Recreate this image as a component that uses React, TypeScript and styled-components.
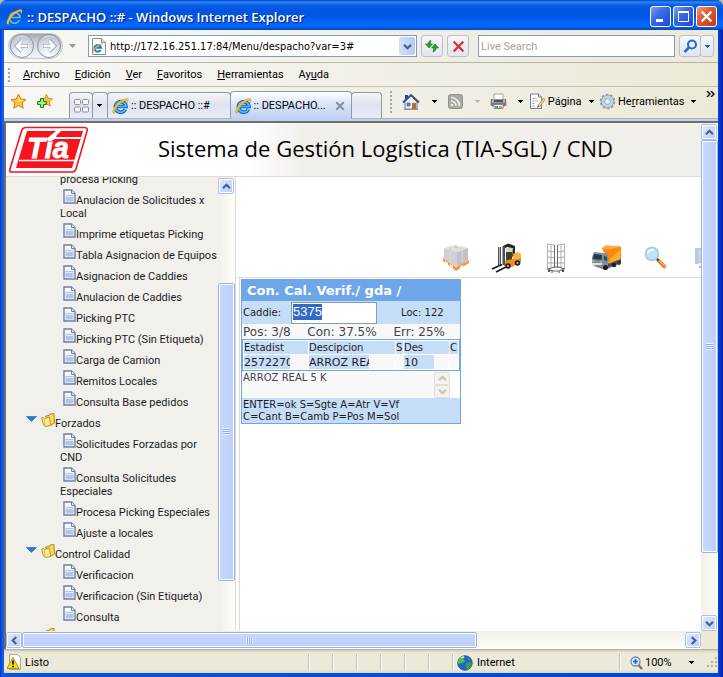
import React from "react";
import styled, { createGlobalStyle, css } from "styled-components";

const ui = `Roboto, "Noto Sans", sans-serif`;
const wide = `"DejaVu Sans", sans-serif`;

const Global = createGlobalStyle`
  * { box-sizing: border-box; }
  html, body, #root { height: 100%; }
  body { margin: 0; background: #b8b8b0; font: 11px/13px ${ui}; color: #000; overflow: hidden; }
  button, input, textarea { font: inherit; color: inherit; margin: 0; padding: 0; border-radius: 0; }
  button { border: 0; background: none; }
  svg { display: block; flex: none; }
`;

/* ---------- window frame ---------- */

const Window = styled.div`
  height: 100%;
  min-height: 480px;
  display: flex;
  flex-direction: column;
  padding: 0 5px 4px 4px;
  border-radius: 7px 7px 0 0;
  overflow: hidden;
  background: linear-gradient(90deg, #0831d9 0, #0855dd 2px, #166aee 3px, #0855dd 4px, #0048d8 calc(100% - 5px), #0030c8 calc(100% - 2px), #001ea0 100%);
`;

const TitleBar = styled.header`
  flex: none;
  height: 30px;
  margin: 0 -5px 0 -4px;
  padding: 3px 6px 0 6px;
  display: flex;
  align-items: center;
  gap: 4px;
  background: linear-gradient(180deg, #0842c0 0, #2a86f8 2px, #0a60ea 5px, #0055e0 10px, #0056e4 16px, #0468fe 24px, #0464f8 27px, #0242b8 30px);
`;

const Title = styled.h1`
  flex: 1;
  margin: 0;
  font: 600 13px/20px "Open Sans", sans-serif;
  color: #fff;
  text-shadow: 1px 1px 1px #0a1883;
  white-space: nowrap;
`;

const CaptionButton = styled.button<{ $close?: boolean }>`
  width: 21px;
  height: 21px;
  margin-left: -2px;
  display: grid;
  place-items: center;
  border: 1px solid #fff;
  border-radius: 3px;
  background: ${(p) =>
    p.$close
      ? "linear-gradient(135deg, #f0a08a, #e05a34 40%, #c8380e)"
      : "linear-gradient(135deg, #7e9ff0, #3a6ae8 40%, #1c48d0)"};
`;

const Chrome = styled.div`
  flex: none;
  background: linear-gradient(90deg, #f7f7f5, #ece9d8);
`;

const AddressRow = styled.form`
  height: 33px;
  padding: 0 4px;
  display: flex;
  align-items: center;
  border-bottom: 1px solid #b8b5a6;
`;

const NavPill = styled.div`
  width: 55px;
  height: 26px;
  display: flex;
  align-items: center;
  justify-content: space-between;
  padding: 0 1px;
  border-radius: 13px;
  background: linear-gradient(#a5a9af, #d4d6da 40%, #f4f5f7);
  border: 1px solid #c3c6cb;
`;

const NavButton = styled.button`
  width: 24px;
  height: 24px;
  display: grid;
  place-items: center;
  border-radius: 12px;
  border: 1px solid #8d939c;
  background: radial-gradient(circle at 50% 90%, #fff, #dde3ea 50%, #c0c9d5 75%, #eef1f5);
`;

const HistoryButton = styled.button`
  width: 25px;
  height: 22px;
  padding-right: 6px;
  display: grid;
  place-items: center;
`;

const field = css`
  height: 22px;
  border: 1px solid #7f9db9;
  background: #fff;
`;

const AddressBox = styled.div`
  ${field}
  flex: 331 1 0;
  min-width: 0;
  display: flex;
  align-items: center;
  gap: 3px;
  padding: 0 1px 0 2px;
`;

const BareInput = styled.input`
  flex: 1;
  min-width: 0;
  border: 0;
  outline: 0;
  background: transparent;
  font-family: "DejaVu Sans Condensed", ${ui};
`;

const DropButton = styled.button`
  width: 16px;
  height: 18px;
  display: grid;
  place-items: center;
  border-radius: 2px;
  background: linear-gradient(90deg, #d3e0fd, #b4caf7);
`;

const SearchInput = styled.input`
  ${field}
  flex: 195 1 0;
  min-width: 0;
  margin-left: 9px;
  padding: 0 2px;
  outline: 0;
  &::placeholder { color: #a5a294; opacity: 1; }
`;

const ToolButton = styled.button<{ $w?: number; $gap?: number }>`
  width: ${(p) => p.$w ?? 22}px;
  height: 22px;
  margin-left: ${(p) => p.$gap ?? 4}px;
  display: grid;
  place-items: center;
  border: 1px solid #b9c0cc;
  border-radius: 3px;
  background: linear-gradient(#f6f7fa, #e2e6f0);
`;

const MenuRow = styled.nav`
  height: 24px;
  display: flex;
  align-items: center;
  gap: 13px;
  padding-left: 4px;
  border-bottom: 1px solid #c5c2b4;
`;

const MenuItems = styled.div`
  display: flex;
  gap: 15px;
  button { height: 20px; }
`;

const Grip = styled.span<{ $h: number }>`
  width: 2px;
  height: ${(p) => p.$h}px;
  flex: none;
  background: repeating-linear-gradient(#a9a698 0 2px, transparent 2px 4px);
`;

const TabRow = styled.div`
  height: 31px;
  display: flex;
  align-items: flex-end;
  padding: 0 3px 0 4px;
`;

const Favs = styled.div`
  width: 61px;
  height: 31px;
  flex: none;
  display: flex;
  align-items: center;
  gap: 9px;
  padding: 0 0 3px 2px;
`;

const Tab = styled.button<{ $active?: boolean; $grow?: number; $w?: number }>`
  flex: ${(p) => (p.$grow ? `${p.$grow} 1 0` : "none")};
  ${(p) => p.$w && `width: ${p.$w}px;`}
  min-width: 0;
  height: ${(p) => (p.$active ? 28 : 26)}px;
  ${(p) => p.$active && "margin-bottom: -1px;"}
  display: flex;
  align-items: center;
  gap: 2px;
  padding: 0 6px 0 4px;
  border: 1px solid #919b9c;
  border-bottom: 0;
  border-radius: 4px 4px 0 0;
  white-space: nowrap;
  text-align: left;
  background: ${(p) =>
    p.$active ? "linear-gradient(#fff, #dce7fb 40%, #bfd0f3)" : "linear-gradient(#f6f6f8, #dfe3ee 45%, #e8ecf6)"};
  & + & { margin-left: -1px; }
  span { flex: 1; }
`;

const Commands = styled.div`
  flex: 326 1 0;
  min-width: 0;
  height: 31px;
  display: flex;
  align-items: center;
  padding: 0 0 2px 8px;
`;

const Command = styled.button<{ $w: number }>`
  width: ${(p) => p.$w}px;
  flex: none;
  display: flex;
  align-items: center;
  gap: 2px;
  white-space: nowrap;
  i { flex: 1; }
`;

const More = styled.button`
  align-self: flex-start;
  margin-left: auto;
  padding: 4px 0 0;
`;

const TabEdge = styled.div`
  height: 3px;
  background: #bfd0f3;
  border-top: 1px solid #a8b4cc;
`;

/* ---------- page area ---------- */

const Viewport = styled.main`
  flex: 1;
  min-height: 0;
  display: grid;
  grid-template: minmax(0, 1fr) 18px / minmax(0, 1fr) 17px;
  border: solid #716f64;
  border-width: 2px 0 0 2px;
  background: #fff;
`;

const Page = styled.div`
  display: flex;
  flex-direction: column;
  min-width: 0;
  min-height: 0;
  overflow: hidden;
`;

const Banner = styled.header`
  flex: none;
  height: 54px;
  display: flex;
  align-items: center;
  gap: 68px;
  padding: 0 2px;
  border-bottom: 1px solid #dedbd0;
  background: linear-gradient(90deg, #fff 240px, #f1efea 300px);
`;

const BannerTitle = styled.h2`
  margin: 0;
  padding-bottom: 3px;
  font: 22px/30px "Open Sans", sans-serif;
  white-space: nowrap;
`;

const Body = styled.div`
  flex: 1;
  min-height: 0;
  display: flex;
`;

const Sidebar = styled.aside`
  width: 230px;
  flex: none;
  display: flex;
  background: #f1f0eb;
  border-right: 1px solid #dedbd0;
`;

const Tree = styled.ul`
  flex: 1;
  min-width: 0;
  margin: 0;
  padding: 0;
  list-style: none;
  overflow: hidden;
  & > li:first-child { margin-top: -4px; }
`;

const Leaf = styled.li`
  padding-left: 54px;
  a { color: #1c1c1c; text-decoration: none; }
  svg { display: inline-block; vertical-align: baseline; margin: 3px 0 0 3px; }
`;

const Branch = styled.li`
  display: flex;
  align-items: flex-end;
  height: 21px;
  padding-left: 20px;
  button { display: flex; align-items: flex-end; height: 21px; color: #1c1c1c; }
  svg:first-child { margin: 0 4px 8px 0; }
  svg + svg { margin-bottom: 3px; }
`;

const Track = styled.div<{ $horizontal?: boolean }>`
  display: flex;
  flex: none;
  min-width: 0;
  min-height: 0;
  flex-direction: ${(p) => (p.$horizontal ? "row" : "column")};
  ${(p) => (p.$horizontal ? "height: 18px; padding: 1px 0;" : "width: 17px; padding: 1px 0 0;")}
  background: ${(p) => `linear-gradient(${p.$horizontal ? "180deg" : "90deg"}, #f0efe8, #fefefb)`};
`;

const ScrollButton = styled.button`
  width: 16px;
  height: 16px;
  flex: none;
  display: grid;
  place-items: center;
  border: 1px solid #a9bff0;
  border-radius: 2px;
  background: linear-gradient(135deg, #e0e9fe, #b9cdfa);
  box-shadow: inset 0 0 0 1px #fff;
`;

const Thumb = styled.div<{ $horizontal?: boolean; $size: number }>`
  flex: ${(p) => p.$size} 1 0;
  display: grid;
  place-items: center;
  border: 1px solid #98b1e4;
  border-radius: 2px;
  box-shadow: inset 0 0 0 1px #fff;
  background: ${(p) => `linear-gradient(${p.$horizontal ? "180deg" : "90deg"}, #c9d8fd, #bccffb)`};
  &::after {
    content: "";
    width: 7px;
    height: 7px;
    background: ${(p) => `repeating-linear-gradient(${p.$horizontal ? "90deg" : "180deg"}, #eef4fe 0 1px, #8cb0f8 1px 2px)`};
  }
`;

const Rest = styled.div<{ $size: number }>`
  flex: ${(p) => p.$size} 1 0;
`;

const Corner = styled.div`
  background: #ece9d8;
`;

const Content = styled.section`
  flex: 1;
  min-width: 0;
  display: flex;
  flex-direction: column;
`;

const IconBar = styled.div`
  flex: none;
  height: 101px;
  display: flex;
  align-items: flex-end;
  padding: 0 0 2px 195px;
  overflow: hidden;
  border-bottom: 1px solid #dedbd0;
  button { width: 50px; height: 34px; flex: none; display: grid; place-items: center; }
`;

const Frame = styled.div`
  flex: 1;
  margin-left: 3px;
  padding: 1px;
  border-left: 1px solid #dedbd0;
`;

const Card = styled.form`
  width: 220px;
  border: 1px solid #6ea7e9;
  font: 10px/12px ${wide};
  color: #1c1c1c;
`;

const CardTitle = styled.h3`
  margin: 0;
  padding: 0 5px;
  font: bold 13px/21px ${wide};
  color: #fff;
  background: #6ea7e9;
  white-space: nowrap;
`;

const CaddieRow = styled.div`
  height: 23px;
  display: flex;
  align-items: center;
  background: #c6ddf7;
  label { width: 49px; padding-left: 1px; }
  output { margin-left: 24px; }
`;

const CaddieInput = styled.div`
  width: 86px;
  height: 22px;
  display: flex;
  align-items: flex-start;
  padding: 1px;
  background: #fff;
  border: 1px solid #7f9db9;
  input {
    width: 29px;
    height: 16px;
    border: 0;
    outline: 0;
    background: #316ac5;
    color: #fff;
    font: 13px/16px "Liberation Sans", sans-serif;
  }
`;

const Stats = styled.div`
  height: 15px;
  display: flex;
  align-items: center;
  padding: 1px 15px 0 1px;
  justify-content: space-between;
  background: #f8f8f8;
  font-size: 12px;
  color: #444;
`;

const Grid = styled.table`
  width: 100%;
  table-layout: fixed;
  border-collapse: separate;
  border-spacing: 1px;
  border: 1px solid #6ea7e9;
  th { font-weight: normal; text-align: left; background: #c6ddf7; padding: 0; height: 13px; }
  td { padding: 0; height: 14px; background: #f8f8f8; }
  th, td { overflow: hidden; white-space: nowrap; }
`;

const CellInput = styled.input<{ $w: number }>`
  display: block;
  width: ${(p) => p.$w}px;
  height: 14px;
  border: 0;
  outline: 0;
  background: #c6ddf7;
  font-size: 11px;
`;

const Detail = styled.div`
  height: 27px;
  display: flex;
  textarea {
    flex: 1;
    min-width: 0;
    height: 27px;
    padding: 1px 0 0 1px;
    border: 0;
    outline: 0;
    resize: none;
    overflow: hidden;
    background: #f8f8f8;
    color: #444;
  }
`;

const Spinner = styled.div`
  width: 26px;
  padding: 1px 10px 0 0;
  background: linear-gradient(90deg, #f8f8f8 16px, #fff 16px);
  button {
    width: 16px;
    height: 13px;
    display: grid;
    place-items: center;
    border: 1px solid #e0ded2;
    border-radius: 2px;
    background: #f4f3ec;
  }
`;

const Help = styled.p`
  margin: 0;
  padding: 1px 1px 0;
  background: #c6ddf7;
  white-space: nowrap;
`;

/* ---------- status bar ---------- */

const StatusBar = styled.footer`
  flex: none;
  height: 24px;
  padding-top: 3px;
  display: flex;
  align-items: center;
  background: linear-gradient(#aaa798 0, #dedbc9 2px, #ece9d8 5px, #ece9d8 20px, #dedac4);
`;

const StatusText = styled.div`
  flex: 1;
  display: flex;
  align-items: center;
  gap: 3px;
  padding-left: 2px;
`;

const Cell = styled.div<{ $w: number }>`
  width: ${(p) => p.$w}px;
  height: 17px;
  flex: none;
  display: flex;
  align-items: center;
  gap: 4px;
  padding-left: 4px;
  border-left: 1px solid #c5c2b4;
  box-shadow: inset 1px 0 #fff;
`;

const ZoomButton = styled.button`
  flex: 1;
  display: flex;
  align-items: center;
  gap: 2px;
  padding-left: 6px;
  svg:last-child { margin-left: 15px; }
`;

/* ---------- drawings ---------- */

const Caret = ({ color = "#000" }: { color?: string }) => (
  <svg width="5" height="3" viewBox="0 0 5 3" shapeRendering="crispEdges">
    <path d="M0 0h5v1H4v1H3v1H2V2H1V1H0z" fill={color} />
  </svg>
);

const turns = { up: 0, right: 90, down: 180, left: 270 };
const Chevron = ({ dir, color = "#4d6185" }: { dir: keyof typeof turns; color?: string }) => (
  <svg width="9" height="9" viewBox="0 0 9 9">
    <path d="M1 6.2 4.5 2.7 8 6.2" transform={`rotate(${turns[dir]} 4.5 4.5)`} fill="none" stroke={color} strokeWidth="2.2" />
  </svg>
);

const IeIcon = () => (
  <svg width="17" height="16" viewBox="0 0 17 16">
    <path d="M13.500 11.200A5.300 5.300 0 1 1 14 8.500H5" fill="none" stroke="#0c5fc4" strokeWidth="3.600" />
    <path d="M13.500 11.200A5.300 5.300 0 1 1 14 8.500H5" fill="none" stroke="#58bcf6" strokeWidth="1.700" />
    <path d="M3 15.200C-.8 16 .6 10.800 4.600 6.200 8.800 1.500 15-.8 16 1.200c.5 1-.2 2.600-1 3.800.2-1.600.1-2.800-1.300-2.600C9 3.200 1.600 11.200 3 15.200z" fill="#fbc02a" stroke="#d38c10" strokeWidth=".4" />
  </svg>
);

const PageIe = () => (
  <svg width="16" height="17" viewBox="0 0 16 17">
    <path d="M1.500.5h9l4 4v12h-13z" fill="#fffef8" stroke="#918f80" />
    <path d="M10.500.5v4h4" fill="#e4e2d2" stroke="#918f80" />
    <path d="M9.600 12A3.300 3.300 0 1 1 10 9.800H4.500" fill="none" stroke="#1c78d8" strokeWidth="2" />
    <path d="M2.400 14.500C1 13 7 5.600 11.500 6" fill="none" stroke="#f0b01a" strokeWidth="1.200" />
  </svg>
);

const Arrow = ({ flip }: { flip?: boolean }) => (
  <svg width="16" height="16" viewBox="0 0 16 16">
    <path d="M8 2.500 2.500 8 8 13.500M3 8h11" transform={flip ? "rotate(180 8 8)" : undefined} fill="none" stroke="#9aa7ba" strokeWidth="4" />
    <path d="M8 3 3 8l5 5M3.500 8H13.500" transform={flip ? "rotate(180 8 8)" : undefined} fill="none" stroke="#fff" strokeWidth="2.500" />
  </svg>
);

const Refresh = () => (
  <svg width="16" height="16" viewBox="0 0 16 16">
    <path d="M7 2.500C5 3 4 4.500 4 6H1.500L5 10l3.500-4H6.300C6.300 5 6.500 3.800 7 2.500z" fill="#2fa12b" stroke="#16711a" strokeWidth=".6" />
    <path d="M9 14c2.200-.5 3-2 3-4h2.500L11 6l-3.500 4h2.200C9.700 11.500 9.500 12.800 9 14z" fill="#2fa12b" stroke="#16711a" strokeWidth=".6" />
  </svg>
);

const Cross = ({ size, color, weight }: { size: number; color: string; weight: number }) => (
  <svg width={size} height={size} viewBox="0 0 12 12">
    <path d="M1.500 1.500l9 9M10.500 1.500l-9 9" stroke={color} strokeWidth={weight} />
  </svg>
);

const Lens = () => (
  <svg width="15" height="15" viewBox="0 0 15 15">
    <circle cx="9" cy="5.500" r="4" fill="#e8f2fe" stroke="#2468d8" strokeWidth="2" />
    <path d="M6 8.500 1.500 13" stroke="#2468d8" strokeWidth="2.500" />
  </svg>
);

const starPath = "M8.500 1l2.300 5 5.200.5-4 3.500 1.300 5.300-4.800-2.800-4.800 2.800L5 10 1 6.500 6.200 6z";
const Star = () => (
  <svg width="17" height="17" viewBox="0 0 17 17">
    <path d={starPath} fill="#ffc233" stroke="#c8802c" />
    <path d="M8.500 3l1.600 4 3.500.4-5 1.500z" fill="#ffe88a" />
  </svg>
);
const AddStar = () => (
  <svg width="18" height="17" viewBox="0 0 18 17">
    <path d={starPath} transform="translate(3.500 .5) scale(.82)" fill="#ffc233" stroke="#c8802c" />
    <path d="M4.500 5.500h3v3h3v3h-3v3h-3v-3h-3v-3h3z" fill="#7fdc5c" stroke="#1c8a1c" />
    <path d="M6 7v6M3 10h6" stroke="#d4f8b8" />
  </svg>
);

const QuickTabs = () => (
  <svg width="16" height="14" viewBox="0 0 16 14" fill="#f4f5f8" stroke="#8a90a0">
    <rect x=".5" y=".5" width="6" height="5" rx="1" />
    <rect x="8.500" y=".5" width="6" height="5" rx="1" />
    <rect x=".5" y="8" width="6" height="5" rx="1" />
    <rect x="8.500" y="8" width="6" height="5" rx="1" />
  </svg>
);

const Home = () => (
  <svg width="18" height="18" viewBox="0 0 18 18">
    <path d="M3 2h3v5H3z" fill="#2340a0" />
    <path d="M3 8.500 9 3l6 5.500V16H3z" fill="#f2f4f8" stroke="#6b7486" />
    <path d="M1 9.500 9 2l8 7.500" fill="none" stroke="#38557e" strokeWidth="2" />
    <path d="M10 10h4v6h-4z" fill="#b5702e" />
    <path d="M5 10h3v3H5z" fill="#4b91e8" stroke="#2c4878" strokeWidth=".6" />
    <path d="M2 16.500h14" stroke="#8a94a0" />
  </svg>
);

const Rss = () => (
  <svg width="15" height="15" viewBox="0 0 15 15">
    <rect x=".5" y=".5" width="14" height="14" rx="2" fill="#aaa9a4" stroke="#93928c" />
    <path d="M3 7a5 5 0 0 1 5 5M3 3.500A8.500 8.500 0 0 1 11.500 12" fill="none" stroke="#f4f3ee" strokeWidth="1.600" />
    <circle cx="4" cy="11" r="1.300" fill="#f4f3ee" />
  </svg>
);

const Printer = () => (
  <svg width="17" height="17" viewBox="0 0 17 17">
    <path d="M4 1h9v7H4z" fill="#fcfcfc" stroke="#a5a5a5" />
    <path d="M1 6h15l.5 6-2 1.500h-12L.5 12z" fill="#77797e" />
    <path d="M2 6.500h13v3H2z" fill="#b5b7bb" />
    <path d="M4 8h9" stroke="#333" strokeWidth="1.500" />
    <path d="M4 11.500h9v4H4z" fill="#fff" stroke="#8a8a8a" />
    <path d="M5 14h3" stroke="#3c9be0" strokeWidth="2" />
    <path d="M9 14h3" stroke="#dca030" strokeWidth="2" />
  </svg>
);

const PageEdit = () => (
  <svg width="17" height="17" viewBox="0 0 17 17">
    <path d="M1.500 1h8l3 3v11.500h-11z" fill="#fff" stroke="#777d8c" />
    <path d="M9.500 1v3h3" fill="#dce2ee" stroke="#777d8c" />
    <path d="M3.500 5.500h4M3.500 8h5M3.500 10.500h3M3.500 13h2" stroke="#8095c8" strokeDasharray="2 1" />
    <path d="M15.500 5.500 10 13" stroke="#a8783c" strokeWidth="2.600" />
    <path d="M15.500 5.500 10 13" stroke="#f8d28e" strokeWidth="1.400" />
    <path d="M9 12 8 15l2.500-1.500z" fill="#554" />
  </svg>
);

const Gear = () => (
  <svg width="17" height="17" viewBox="0 0 17 17">
    <circle cx="8.500" cy="8.500" r="6.800" fill="none" stroke="#8c9cb0" strokeWidth="2" strokeDasharray="2.600 1.700" />
    <circle cx="8.500" cy="8.500" r="4.500" fill="none" stroke="#8094ac" strokeWidth="4" />
    <circle cx="8.500" cy="8.500" r="4.500" fill="none" stroke="#c2d4e6" strokeWidth="2.800" />
  </svg>
);

const DocIcon = () => (
  <svg width="13" height="15" viewBox="0 0 13 15">
    <path d="M1 1h7.500L12 4.500V14H1z" fill="#f8faff" stroke="#6b7fa8" strokeWidth="1.400" />
    <path d="M2.500 6h8v6.500h-8z" fill="#b5c3e4" />
    <path d="M2.500 5h4M2.500 7.500h8" stroke="#e2e9f8" />
    <path d="M8.500 1v3.500H12" fill="#dfe7f6" stroke="#6b7fa8" />
  </svg>
);

const FolderIcon = () => (
  <svg width="14" height="14" viewBox="0 0 14 14">
    <path d="M4.500 3 8 2.500 9 1l4-.5.400 9.500-4 2.500z" fill="#f6d960" stroke="#ab7d12" strokeWidth=".9" />
    <path d="M.6 5 2.500 4.500l1 1 5-1.500 1 8.500-4.500 1L2.500 12z" fill="#ffec92" stroke="#b88b18" strokeWidth=".9" />
    <path d="M3 6l1.200 6" stroke="#e0b840" />
  </svg>
);

const BranchArrow = ({ closed }: { closed?: boolean }) => (
  <svg width="11" height="6" viewBox="0 0 11 6">
    <path d={closed ? "M3 0l6 5H3z" : "M.5.500h10l-5 5z"} fill="#1e7ce0" stroke="#1860b8" strokeWidth=".6" />
  </svg>
);

const TiaLogo = () => (
  <svg width="82" height="48" viewBox="0 0 82 48" role="img" aria-label="Tía">
    <path d="M18 1.500h58q4 0 3.200 3L68 43q-.8 3-4 3H4q-3 0-2.200-2.500L13.500 5q1-3.500 4.500-3.500z" fill="#fff" stroke="#f8131d" strokeWidth="1.600" />
    <path d="M19 5h56L64 42H8z" fill="#f8131d" />
    <text x="19" y="32" fontFamily="Liberation Sans, sans-serif" fontSize="29" fontWeight="bold" fontStyle="italic" fill="#fff" stroke="#fff" strokeWidth=".8">Tía</text>
    <path d="M37 14 48 5h5l-6 6h26l-.7 2H47l-4 2z" fill="#fff" />
    <path d="M11 34.500h56" stroke="#fff" strokeWidth="1.600" />
  </svg>
);

const Pallet = () => (
  <svg width="28" height="28" viewBox="0 0 28 28">
    <path d="M1 14l13 9 13-7v3l-13 8L1 17z" fill="#f8963a" />
    <path d="M3 17l3 2v2l-3-2zM8 20l3 2v2l-3-2zM18 23l3-2v2l-3 2z" fill="#fff" />
    <path d="M2 4 13 1l13 3-11 4z" fill="#dcdde0" />
    <path d="M2 4l13 4v15L2 15z" fill="#ced0d4" />
    <path d="M15 8l11-4v12l-11 7z" fill="#c0c2c7" />
    <path d="M7 2.500 20 6v13M21 2.500 8 6v13" fill="none" stroke="#e6e6ea" strokeWidth=".6" />
    <path d="M12 3l4 1M7 5l2 .5" stroke="#f0b880" />
  </svg>
);

const Forklift = () => (
  <svg width="31" height="30" viewBox="0 0 31 30">
    <path d="M12 3 17 .5l7 2.500v9l-3 2V5l-5-1-3 2z" fill="#242529" />
    <path d="M15 5h7l-1 9h-5z" fill="#d4d8bc" />
    <path d="M15 9h6v9h-6z" fill="#3a4230" />
    <path d="M13 18l9-2 2-6 6 1v8l-9 5-8-1z" fill="#f08a1a" />
    <path d="M22 11l5-2 3 2v4l-7 2z" fill="#ffb040" />
    <path d="M7 4h3v18H7zM11.500 3h2.500v19h-2.500z" fill="#4c4f56" />
    <path d="M8 4h1v18H8z" fill="#b4b7bd" />
    <path d="M1 26l10-4.500M5 29l10-5" stroke="#1c1c20" strokeWidth="1.800" />
    <circle cx="17" cy="23" r="2.800" fill="#222" /><circle cx="17" cy="23" r="1.100" fill="#bbb" />
    <circle cx="26.500" cy="20" r="2.800" fill="#222" /><circle cx="26.500" cy="20" r="1.100" fill="#bbb" />
  </svg>
);

const Cart = () => (
  <svg width="20" height="31" viewBox="0 0 20 31" fill="none">
    <path d="M1.500 26V1l7 1V25M11.500 25V2l7-1v25M1.500 8l7 1M11.500 9l7-1M1.500 14l7 .5M11.500 14.500l7-.5M1.500 20h17M5 2v22M15 2v22" stroke="#a4a6a9" strokeWidth=".9" />
    <path d="M8.500 2v23M11.500 2v23" stroke="#6a6d72" />
    <path d="M2 26l6-2h5l5 2-5 2H7zM6 28v2M13 28v2" stroke="#666" strokeWidth="1.200" />
    <path d="M3 27v2M17 27v2" stroke="#222" strokeWidth="1.600" />
  </svg>
);

const Truck = () => (
  <svg width="31" height="26" viewBox="0 0 31 26">
    <path d="M3 21l11 4 16-7v-3z" fill="#77797e" />
    <path d="M11 3 15 .5 30 1.500v14L18 19z" fill="#fb8a10" />
    <path d="M11 3 15 .5l15 1-12 3z" fill="#ffab40" />
    <path d="M19 14 29 5v9l-10 4z" fill="#ffb028" />
    <path d="M1 12l2-5 9 1 5 1v12l-4 2-12-3z" fill="#7f8e9c" />
    <path d="M3 9l8 1-.5 5L2 14z" fill="#1f3a50" />
    <path d="M13 11l3 1v4l-3-1z" fill="#2e4658" />
    <path d="M1 18h10v2H1z" fill="#dce2e6" />
    <path d="M17 19l13-5v3l-13 5z" fill="#345266" />
    <circle cx="14.500" cy="22.500" r="2.500" fill="#1c1c1c" /><circle cx="23" cy="20" r="2.300" fill="#222" /><circle cx="28" cy="18" r="2" fill="#333" />
    <path d="M1 16h2M9 17h2" stroke="#ffb020" strokeWidth="1.500" />
  </svg>
);

const Magnifier = () => (
  <svg width="24" height="24" viewBox="0 0 24 24">
    <circle cx="8" cy="8" r="6.500" fill="#bfe2fa" stroke="#a9c4da" strokeWidth="1.500" />
    <path d="M4 7a4.500 4.500 0 0 1 6-3" fill="none" stroke="#f4fbff" strokeWidth="2" />
    <path d="M13 13l2 2" stroke="#444" strokeWidth="2.500" />
    <path d="M14.500 14.500l7 7" stroke="#d07018" strokeWidth="3.600" />
    <path d="M15 14.500l6.500 6.500" stroke="#ffb45c" strokeWidth="1.600" />
  </svg>
);

const Monitor = () => (
  <svg width="24" height="26" viewBox="0 0 24 26">
    <path d="M2 4 20 2v15L2 18z" fill="#c3d4e2" stroke="#b4c6d4" />
    <path d="M1 3h3v16H1z" fill="#b9cbda" />
    <path d="M5 21h12v2H5z" fill="#d8c06a" />
  </svg>
);

const Warning = () => (
  <svg width="16" height="17" viewBox="0 0 16 17">
    <path d="M3.500.5h8l3 3v12h-11z" fill="#fff" stroke="#aaa898" />
    <path d="M7 3.500 13 14.500H1z" fill="#ffd91c" stroke="#b89400" strokeLinejoin="round" />
    <path d="M7 6.500v4M7 11.800v1.500" stroke="#000" strokeWidth="1.600" />
  </svg>
);

const Globe = () => (
  <svg width="16" height="16" viewBox="0 0 16 16">
    <circle cx="8" cy="8" r="7.300" fill="#2462d8" stroke="#233e7c" strokeWidth=".7" />
    <path d="M2 4c2-2.500 5-3 6-2L6.500 4 8 6 5 8.500 3 8 1 9V6z" fill="#54c03c" />
    <path d="M9 8l4-1 2 2-2 4-3 2-1-3zM11 2l3 3-2 .5z" fill="#36a63c" />
    <path d="M4 3q2-1.500 3-1" stroke="#d8f4ff" fill="none" strokeWidth="1.200" />
  </svg>
);

const ZoomLens = () => (
  <svg width="13" height="14" viewBox="0 0 13 14">
    <path d="M8 8.500l4 4.500" stroke="#8a6a50" strokeWidth="2.200" />
    <circle cx="5.500" cy="5.500" r="4.500" fill="#d9ecff" stroke="#6d88b0" strokeWidth="1.300" />
    <path d="M5.500 3v5M3 5.500h5" stroke="#1668c8" strokeWidth="1.700" />
  </svg>
);

const SizeGrip = () => (
  <svg width="11" height="11" viewBox="0 0 11 11" fill="#b5b2a0">
    <path d="M8 0h2v2H8zM8 4h2v2H8zM8 8h2v2H8zM4 4h2v2H4zM4 8h2v2H4zM0 8h2v2H0z" />
  </svg>
);

/* ---------- composition ---------- */

type Node = { text: string; kind?: "branch" | "closed" | "tail" };
const tree: Node[] = [
  { text: "procesa Picking", kind: "tail" },
  { text: "Anulacion de Solicitudes x Local" },
  { text: "Imprime etiquetas Picking" },
  { text: "Tabla Asignacion de Equipos" },
  { text: "Asignacion de Caddies" },
  { text: "Anulacion de Caddies" },
  { text: "Picking PTC" },
  { text: "Picking PTC (Sin Etiqueta)" },
  { text: "Carga de Camion" },
  { text: "Remitos Locales" },
  { text: "Consulta Base pedidos" },
  { text: "Forzados", kind: "branch" },
  { text: "Solicitudes Forzadas por CND" },
  { text: "Consulta Solicitudes Especiales" },
  { text: "Procesa Picking Especiales" },
  { text: "Ajuste a locales" },
  { text: "Control Calidad", kind: "branch" },
  { text: "Verificacion" },
  { text: "Verificacion (Sin Etiqueta)" },
  { text: "Consulta" },
  { text: "", kind: "closed" },
];

const menus: [string, string, string][] = [
  ["", "A", "rchivo"],
  ["", "E", "dición"],
  ["", "V", "er"],
  ["", "F", "avoritos"],
  ["", "H", "erramientas"],
  ["Ay", "u", "da"],
];

const TreeNode = ({ node }: { node: Node }) =>
  node.kind === "branch" || node.kind === "closed" ? (
    <Branch>
      <button type="button" aria-label={node.text || "Carpeta"}>
        <BranchArrow closed={node.kind === "closed"} />
        <FolderIcon />
        <span>{node.text}</span>
      </button>
    </Branch>
  ) : (
    <Leaf>
      <a href="#">
        {node.kind !== "tail" && <DocIcon />}
        {node.text}
      </a>
    </Leaf>
  );

export default function App() {
  return (
    <>
      <Global />
      <Window>
        <TitleBar>
          <IeIcon />
          <Title>:: DESPACHO ::# - Windows Internet Explorer</Title>
          <CaptionButton aria-label="Minimizar">
            <svg width="13" height="13"><path d="M2 9h7v3H2z" fill="#fff" /></svg>
          </CaptionButton>
          <CaptionButton aria-label="Maximizar">
            <svg width="13" height="13"><path d="M1.500 2v9.500h10V2M1 2.500h11" fill="none" stroke="#fff" /><path d="M1 1h11v2H1z" fill="#fff" /></svg>
          </CaptionButton>
          <CaptionButton $close aria-label="Cerrar">
            <Cross size={13} color="#fff" weight={2} />
          </CaptionButton>
        </TitleBar>

        <Chrome>
          <AddressRow onSubmit={(e) => e.preventDefault()}>
            <NavPill>
              <NavButton type="button" aria-label="Atrás"><Arrow /></NavButton>
              <NavButton type="button" aria-label="Adelante"><Arrow flip /></NavButton>
            </NavPill>
            <HistoryButton type="button" aria-label="Historial">
              <svg width="7" height="4"><path d="M0 0h7L3.500 4z" fill="#9a9a94" /></svg>
            </HistoryButton>
            <AddressBox>
              <PageIe />
              <BareInput aria-label="Dirección" defaultValue="http://172.16.251.17:84/Menu/despacho?var=3#" />
              <DropButton type="button" aria-label="Direcciones"><Chevron dir="down" /></DropButton>
            </AddressBox>
            <ToolButton type="button" aria-label="Actualizar"><Refresh /></ToolButton>
            <ToolButton type="button" aria-label="Detener"><Cross size={13} color="#d8343c" weight={2} /></ToolButton>
            <SearchInput aria-label="Buscar" placeholder="Live Search" />
            <ToolButton aria-label="Buscar"><Lens /></ToolButton>
            <ToolButton type="button" $w={14} $gap={-1} aria-label="Opciones de búsqueda"><Caret color="#1c58c8" /></ToolButton>
          </AddressRow>

          <MenuRow>
            <Grip $h={14} />
            <MenuItems>
              {menus.map(([a, u, b]) => (
                <button key={b} type="button">{a}<u>{u}</u>{b}</button>
              ))}
            </MenuItems>
          </MenuRow>

          <TabRow>
            <Favs>
              <button aria-label="Favoritos"><Star /></button>
              <button aria-label="Agregar a favoritos"><AddStar /></button>
            </Favs>
            <Tab $w={24} aria-label="Pestañas rápidas"><QuickTabs /></Tab>
            <Tab $w={16} aria-label="Lista de pestañas"><Caret /></Tab>
            <Tab $grow={112}><IeIcon /><span>:: DESPACHO ::#</span></Tab>
            <Tab $grow={111} $active>
              <IeIcon /><span>:: DESPACHO...</span><Cross size={10} color="#8c8f98" weight={2.4} />
            </Tab>
            <Tab $w={31} aria-label="Nueva pestaña" />
            <Commands>
              <Grip $h={22} />
              <Command $w={45} aria-label="Página principal"><i /><Home /><i /><Caret /></Command>
              <Command $w={43} aria-label="Fuentes"><i /><Rss /><i /><Caret color="#bbb8a8" /></Command>
              <Command $w={43} aria-label="Imprimir"><i /><Printer /><i /><Caret /></Command>
              <Command $w={71}><i /><PageEdit /><span>Pá<u>g</u>ina</span><i /><Caret /></Command>
              <Command $w={102}><i /><Gear /><span>He<u>r</u>ramientas</span><i /><Caret /></Command>
              <More aria-label="Más comandos">
                <svg width="9" height="6"><path d="M1 0l3 3-3 3M5 0l3 3-3 3" fill="none" stroke="#000" strokeWidth="1.400" /></svg>
              </More>
            </Commands>
          </TabRow>
          <TabEdge />
        </Chrome>

        <Viewport>
          <Page>
            <Banner>
              <TiaLogo />
              <BannerTitle>Sistema de Gestión Logística (TIA-SGL) / CND</BannerTitle>
            </Banner>
            <Body>
              <Sidebar>
                <Tree>
                  {tree.map((node, i) => <TreeNode key={i} node={node} />)}
                </Tree>
                <Track>
                  <ScrollButton aria-label="Subir"><Chevron dir="up" /></ScrollButton>
                  <Rest $size={89} />
                  <Thumb $size={297} />
                  <Rest $size={50} />
                </Track>
              </Sidebar>
              <Content>
                <IconBar>
                  <button aria-label="Palets"><Pallet /></button>
                  <button aria-label="Montacargas"><Forklift /></button>
                  <button aria-label="Caddies"><Cart /></button>
                  <button aria-label="Camiones"><Truck /></button>
                  <button aria-label="Consultar"><Magnifier /></button>
                  <button aria-label="Equipos"><Monitor /></button>
                </IconBar>
                <Frame>
                  <Card onSubmit={(e) => e.preventDefault()}>
                    <CardTitle>Con. Cal. Verif./ gda /</CardTitle>
                    <CaddieRow>
                      <label htmlFor="caddie">Caddie:</label>
                      <CaddieInput><input id="caddie" defaultValue="5375" /></CaddieInput>
                      <output>Loc: 122</output>
                    </CaddieRow>
                    <Stats>
                      <span>Pos: 3/8</span>
                      <span>Con: 37.5%</span>
                      <span>Err: 25%</span>
                    </Stats>
                    <Grid>
                      <colgroup>
                        <col width="64" /><col width="86" /><col width="7" /><col width="45" /><col />
                      </colgroup>
                      <thead>
                        <tr><th>Estadist</th><th>Descipcion</th><th>S</th><th>Des</th><th>C</th></tr>
                      </thead>
                      <tbody>
                        <tr>
                          <td><CellInput $w={46} aria-label="Estadist" defaultValue="2572270" /></td>
                          <td><CellInput $w={60} aria-label="Descipcion" defaultValue="ARROZ REAL 5 K" /></td>
                          <td />
                          <td><CellInput $w={30} aria-label="Des" defaultValue="10" /></td>
                          <td />
                        </tr>
                      </tbody>
                    </Grid>
                    <Detail>
                      <textarea aria-label="Detalle" defaultValue="ARROZ REAL 5 K" />
                      <Spinner>
                        <button type="button" aria-label="Anterior"><Chevron dir="up" color="#c8c5b4" /></button>
                        <button type="button" aria-label="Siguiente"><Chevron dir="down" color="#c8c5b4" /></button>
                      </Spinner>
                    </Detail>
                    <Help>
                      ENTER=ok S=Sgte A=Atr V=Vf
                      <br />
                      C=Cant B=Camb P=Pos M=Sol
                    </Help>
                  </Card>
                </Frame>
              </Content>
            </Body>
          </Page>
          <Track>
            <ScrollButton aria-label="Subir página"><Chevron dir="up" /></ScrollButton>
            <Thumb $size={412} />
            <Rest $size={62} />
            <ScrollButton aria-label="Bajar página"><Chevron dir="down" /></ScrollButton>
          </Track>
          <Track $horizontal>
            <ScrollButton aria-label="Izquierda"><Chevron dir="left" /></ScrollButton>
            <Thumb $horizontal $size={453} />
            <Rest $size={208} />
            <ScrollButton aria-label="Derecha"><Chevron dir="right" /></ScrollButton>
          </Track>
          <Corner />
        </Viewport>

        <StatusBar>
          <StatusText><Warning />Listo</StatusText>
          {[1, 2, 3, 4, 5, 6].map((n) => <Cell key={n} $w={24} />)}
          <Cell $w={167}><Globe />Internet</Cell>
          <Cell $w={99}>
            <ZoomButton><ZoomLens />100%<Caret /></ZoomButton>
            <SizeGrip />
          </Cell>
        </StatusBar>
      </Window>
    </>
  );
}
